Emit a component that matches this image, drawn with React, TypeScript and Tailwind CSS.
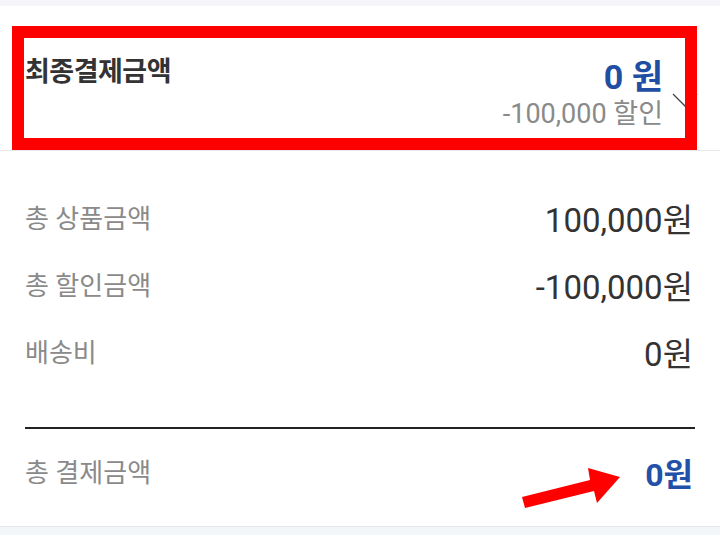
const rows = [
    {label: "총 상품금액", value: "100,000"},
    {label: "총 할인금액", value: "-100,000"},
    {label: "배송비", value: "0"},
];

function Arrow() {
    return (
        <svg className="absolute left-0 top-0 pointer-events-none" width="720" height="535" viewBox="0 0 720 535">
            <polygon
                points="620,477 588,468 590,480 522,497 525,508 594,491 597,503"
                fill="#ff0000"
            />
        </svg>
    );
}

export default function App() {
    return (
        <div
            className="relative w-[720px] h-[535px] bg-white overflow-hidden flex flex-col"
            style={{fontFamily: 'Roboto, "Noto Sans CJK KR", "Noto Sans", sans-serif'}}
        >
            <div className="h-[6px] bg-[#f6f6fa]"/>

            {/* 최종결제금액 header */}
            <div className="relative h-[145px] border-b border-[#e8e8ec] flex items-start justify-between pl-[25px] pr-[22px] pt-[48px]">
                <h2 className="text-[27px] leading-[36px] font-bold text-[#333] tracking-[-0.5px]">최종결제금액</h2>
                <div className="flex items-start pt-[3px]">
                    <div className="flex flex-col items-end">
                        <span className="text-[34px] leading-[40px] font-bold text-[#1f4ea3]">0 원</span>
                        <span className="text-[27px] leading-[34px] text-[#8a8a8a]">-100,000 할인</span>
                    </div>
                    <svg className="ml-[9px] mt-[36px]" width="26" height="16" viewBox="0 0 26 16" fill="none">
                        <path d="M1 1 L13 13 L25 1" stroke="#444" strokeWidth="1.3"/>
                    </svg>
                </div>
                <div className="absolute left-[12px] top-[20px] w-[685px] h-[124px] border-[12px] border-[#ff0000]"/>
            </div>

            {/* 금액 상세 */}
            <div className="flex-1 flex flex-col px-[25px] pt-[35px]">
                {rows.map((r) => (
                    <div key={r.label} className="h-[67px] flex items-center justify-between">
                        <span className="text-[26px] text-[#8a8a8a]">{r.label}</span>
                        <span className="text-[33px] text-[#333] pr-[2px] pt-[2px]">{r.value}원</span>
                    </div>
                ))}
                <div className="mt-[40px] h-[2px] bg-[#222]"/>
                <div className="h-[92px] flex items-center justify-between">
                    <span className="text-[26px] text-[#8a8a8a] -mt-[4px]">총 결제금액</span>
                    <span className="text-[32px] font-bold text-[#2350a8] pr-[2px]">0원</span>
                </div>
            </div>

            <div className="h-[9px] border-t border-[#e4e6ea] bg-[#f3f6f9]"/>
            <Arrow/>
        </div>
    );
}
